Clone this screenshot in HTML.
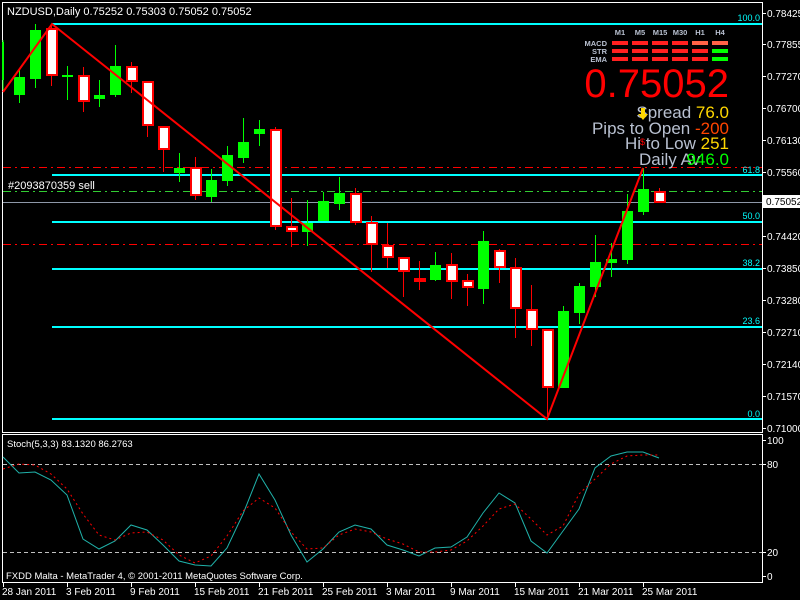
<!DOCTYPE html>
<html><head><meta charset="utf-8"><style>
html,body{margin:0;padding:0;background:#000;width:800px;height:600px;overflow:hidden}
svg{display:block}
text{font-family:"Liberation Sans",sans-serif}
</style></head><body>
<svg width="800" height="600" viewBox="0 0 800 600" xmlns="http://www.w3.org/2000/svg">
<rect width="800" height="600" fill="#000"/>
<rect x="2.5" y="2.5" width="760" height="430" fill="none" stroke="#fff"/>
<rect x="2.5" y="434.5" width="760" height="148" fill="none" stroke="#fff"/>
<g stroke-width="1">
<line x1="3" y1="167.5" x2="762" y2="167.5" stroke="#ff0000" stroke-dasharray="8,4,2,4"/>
<line x1="3" y1="244.5" x2="762" y2="244.5" stroke="#ff0000" stroke-dasharray="8,4,2,4"/>
<line x1="3" y1="191.5" x2="762" y2="191.5" stroke="#32cd32" stroke-dasharray="8,4,2,4"/>
<line x1="3" y1="202.5" x2="762" y2="202.5" stroke="#8e98a8"/>
</g>
<g stroke="#00ffff" stroke-width="2">
<line x1="52" y1="24" x2="762" y2="24"/>
<line x1="52" y1="175" x2="762" y2="175"/>
<line x1="52" y1="222" x2="762" y2="222"/>
<line x1="52" y1="269" x2="762" y2="269"/>
<line x1="52" y1="327" x2="762" y2="327"/>
<line x1="52" y1="419" x2="762" y2="419"/>
</g>
<g fill="#00ffff" font-size="9" text-anchor="end">
<text x="760" y="21">100.0</text>
<text x="760" y="173">61.8</text>
<text x="760" y="219">50.0</text>
<text x="760" y="266">38.2</text>
<text x="760" y="324">23.6</text>
<text x="760" y="417">0.0</text>
</g>
<g>
<line x1="3" y1="40" x2="3" y2="90" stroke="#00ff00"/>
<rect x="2" y="42" width="2" height="38" fill="#00ff00"/>
</g>
<g stroke-width="1">
<g stroke="#00ff00" fill="#00ff00">
<line x1="19.5" y1="70" x2="19.5" y2="103"/><rect x="14.5" y="77.5" width="10" height="17"/>
<line x1="35.5" y1="24" x2="35.5" y2="88"/><rect x="30.5" y="30.5" width="10" height="48"/>
<line x1="67.5" y1="66" x2="67.5" y2="100"/><rect x="62.5" y="75.5" width="10" height="1"/>
<line x1="99.5" y1="80" x2="99.5" y2="107"/><rect x="94.5" y="95.5" width="10" height="3"/>
<line x1="115.5" y1="45" x2="115.5" y2="97"/><rect x="110.5" y="66.5" width="10" height="28"/>
<line x1="179.5" y1="153" x2="179.5" y2="182"/><rect x="174.5" y="168.5" width="10" height="4"/>
<line x1="211.5" y1="169" x2="211.5" y2="202"/><rect x="206.5" y="180.5" width="10" height="16"/>
<line x1="227.5" y1="146" x2="227.5" y2="186"/><rect x="222.5" y="155.5" width="10" height="25"/>
<line x1="243.5" y1="118" x2="243.5" y2="163"/><rect x="238.5" y="142.5" width="10" height="15"/>
<line x1="259.5" y1="120" x2="259.5" y2="146"/><rect x="254.5" y="129.5" width="10" height="4"/>
<line x1="307.5" y1="200" x2="307.5" y2="246"/><rect x="302.5" y="223.5" width="10" height="8"/>
<line x1="323.5" y1="192" x2="323.5" y2="221"/><rect x="318.5" y="201.5" width="10" height="19"/>
<line x1="339.5" y1="177" x2="339.5" y2="210"/><rect x="334.5" y="193.5" width="10" height="10"/>
<line x1="435.5" y1="252" x2="435.5" y2="281"/><rect x="430.5" y="265.5" width="10" height="14"/>
<line x1="483.5" y1="231" x2="483.5" y2="304"/><rect x="478.5" y="241.5" width="10" height="47"/>
<line x1="563.5" y1="306" x2="563.5" y2="388"/><rect x="558.5" y="311.5" width="10" height="76"/>
<line x1="579.5" y1="283" x2="579.5" y2="324"/><rect x="574.5" y="286.5" width="10" height="26"/>
<line x1="595.5" y1="235" x2="595.5" y2="297"/><rect x="590.5" y="262.5" width="10" height="24"/>
<line x1="611.5" y1="243" x2="611.5" y2="277"/><rect x="606.5" y="259.5" width="10" height="3"/>
<line x1="627.5" y1="194" x2="627.5" y2="264"/><rect x="622.5" y="211.5" width="10" height="48"/>
<line x1="643.5" y1="168" x2="643.5" y2="215"/><rect x="638.5" y="189.5" width="10" height="22"/>
</g>
<g stroke="#ff0000" fill="#fff" stroke-width="2">
<line x1="51.5" y1="24" x2="51.5" y2="86" stroke-width="1"/><rect x="47" y="29" width="10" height="46"/>
<line x1="83.5" y1="67" x2="83.5" y2="112" stroke-width="1"/><rect x="79" y="76" width="10" height="25"/>
<line x1="131.5" y1="62" x2="131.5" y2="93" stroke-width="1"/><rect x="127" y="67" width="10" height="14"/>
<line x1="147.5" y1="81" x2="147.5" y2="137" stroke-width="1"/><rect x="143" y="82" width="10" height="43"/>
<line x1="163.5" y1="126" x2="163.5" y2="172" stroke-width="1"/><rect x="159" y="127" width="10" height="22"/>
<line x1="195.5" y1="157" x2="195.5" y2="200" stroke-width="1"/><rect x="191" y="168" width="10" height="27"/>
<line x1="275.5" y1="127" x2="275.5" y2="230" stroke-width="1"/><rect x="271" y="130" width="10" height="96"/>
<line x1="291.5" y1="198" x2="291.5" y2="247" stroke-width="1"/><rect x="287" y="227" width="10" height="4"/>
<line x1="355.5" y1="188" x2="355.5" y2="225" stroke-width="1"/><rect x="351" y="194" width="10" height="28"/>
<line x1="371.5" y1="216" x2="371.5" y2="272" stroke-width="1"/><rect x="367" y="223" width="10" height="21"/>
<line x1="387.5" y1="223" x2="387.5" y2="268" stroke-width="1"/><rect x="383" y="246" width="10" height="11"/>
<line x1="403.5" y1="257" x2="403.5" y2="297" stroke-width="1"/><rect x="399" y="258" width="10" height="13"/>
<line x1="419.5" y1="261" x2="419.5" y2="290" stroke-width="1"/><rect x="415" y="279" width="10" height="2"/>
<line x1="451.5" y1="253" x2="451.5" y2="299" stroke-width="1"/><rect x="447" y="265" width="10" height="16"/>
<line x1="467.5" y1="274" x2="467.5" y2="306" stroke-width="1"/><rect x="463" y="281" width="10" height="6"/>
<line x1="499.5" y1="249" x2="499.5" y2="283" stroke-width="1"/><rect x="495" y="251" width="10" height="16"/>
<line x1="515.5" y1="258" x2="515.5" y2="338" stroke-width="1"/><rect x="511" y="268" width="10" height="40"/>
<line x1="531.5" y1="285" x2="531.5" y2="346" stroke-width="1"/><rect x="527" y="310" width="10" height="19"/>
<line x1="547.5" y1="329" x2="547.5" y2="418" stroke-width="1"/><rect x="543" y="330" width="10" height="57"/>
<line x1="659.5" y1="188" x2="659.5" y2="202" stroke-width="1"/><rect x="655" y="192" width="10" height="10"/>
</g>
</g>
<polyline points="3,92 52,24 547,419 643,168" fill="none" stroke="#ff0000" stroke-width="2"/>
<text x="7" y="15" fill="#fff" font-size="11">NZDUSD,Daily  0.75252 0.75303 0.75052 0.75052</text>
<text x="8" y="189" fill="#fff" font-size="11">#2093870359 sell</text>
<g fill="#b8c0d0" font-size="7.5" font-weight="bold" text-anchor="middle">
<text x="620" y="35">M1</text><text x="640" y="35">M5</text><text x="660" y="35">M15</text><text x="680" y="35">M30</text><text x="700" y="35">H1</text><text x="720" y="35">H4</text>
</g>
<g fill="#b8c0d0" font-size="7.5" font-weight="bold" text-anchor="end">
<text x="607" y="46">MACD</text><text x="607" y="54">STR</text><text x="607" y="62">EMA</text>
</g>
<g fill="#ff2020">
<rect x="612" y="41" width="16" height="4"/><rect x="632" y="41" width="16" height="4"/><rect x="652" y="41" width="16" height="4"/><rect x="672" y="41" width="16" height="4"/>
<rect x="612" y="49" width="16" height="4"/><rect x="632" y="49" width="16" height="4"/><rect x="652" y="49" width="16" height="4"/><rect x="672" y="49" width="16" height="4"/><rect x="692" y="49" width="16" height="4"/>
<rect x="612" y="57" width="16" height="4"/><rect x="632" y="57" width="16" height="4"/><rect x="652" y="57" width="16" height="4"/><rect x="672" y="57" width="16" height="4"/><rect x="692" y="57" width="16" height="4"/>
</g>
<rect x="692" y="41" width="16" height="4" fill="#ff6347"/><rect x="712" y="41" width="16" height="4" fill="#ff6347"/>
<rect x="712" y="49" width="16" height="4" fill="#00ff00"/><rect x="712" y="57" width="16" height="4" fill="#00ff00"/>
<text x="729" y="97" fill="#ff0000" font-size="40" text-anchor="end">0.75052</text>
<g font-size="17">
<text x="729" y="118" text-anchor="end"><tspan fill="#b8c0d0">Spread </tspan><tspan fill="#ffd700">76.0</tspan></text>
<text x="729" y="134" text-anchor="end"><tspan fill="#b8c0d0">Pips to Open </tspan><tspan fill="#ff4500">-200</tspan></text>
<text x="729" y="149" text-anchor="end"><tspan fill="#b8c0d0">Hi to Low  </tspan><tspan fill="#ffd700">251</tspan></text>
<text x="639" y="165" fill="#b8c0d0">Daily Av</text>
<text x="729" y="165" fill="#00ff00" text-anchor="end">946.0</text>
</g>
<text x="640" y="145" fill="#ff0000" font-size="9">$</text>
<path d="M641,108 h4 v6 h3 l-5,6 l-5,-6 h3z" fill="#ffd700"/>
<g stroke="#fff">
<line x1="762" y1="13.5" x2="766" y2="13.5"/><line x1="762" y1="44.5" x2="766" y2="44.5"/><line x1="762" y1="76.5" x2="766" y2="76.5"/><line x1="762" y1="108.5" x2="766" y2="108.5"/><line x1="762" y1="140.5" x2="766" y2="140.5"/><line x1="762" y1="172.5" x2="766" y2="172.5"/><line x1="762" y1="236.5" x2="766" y2="236.5"/><line x1="762" y1="268.5" x2="766" y2="268.5"/><line x1="762" y1="300.5" x2="766" y2="300.5"/><line x1="762" y1="332.5" x2="766" y2="332.5"/><line x1="762" y1="364.5" x2="766" y2="364.5"/><line x1="762" y1="396.5" x2="766" y2="396.5"/><line x1="762" y1="428.5" x2="766" y2="428.5"/>
<line x1="762" y1="440.5" x2="766" y2="440.5"/><line x1="762" y1="464.5" x2="766" y2="464.5"/><line x1="762" y1="552.5" x2="766" y2="552.5"/><line x1="762" y1="576.5" x2="766" y2="576.5"/>
</g>
<g fill="#fff" font-size="10">
<text x="767" y="17">0.78425</text><text x="767" y="48">0.77855</text><text x="767" y="80">0.77270</text><text x="767" y="112">0.76700</text><text x="767" y="144">0.76130</text><text x="767" y="176">0.75560</text>
<text x="767" y="240">0.74420</text><text x="767" y="272">0.73850</text><text x="767" y="304">0.73280</text><text x="767" y="336">0.72710</text><text x="767" y="368">0.72140</text><text x="767" y="400">0.71570</text><text x="767" y="432">0.71000</text>
<text x="767" y="444">100</text><text x="767" y="468">80</text><text x="767" y="556">20</text><text x="767" y="580">0</text>
</g>
<rect x="763" y="195" width="37" height="13" fill="#fff"/>
<text x="766" y="205" fill="#000" font-size="10">0.75052</text>
<line x1="3" y1="464.5" x2="762" y2="464.5" stroke="#c0c0c0" stroke-dasharray="4,3"/>
<line x1="3" y1="552.5" x2="762" y2="552.5" stroke="#c0c0c0" stroke-dasharray="4,3"/>
<text x="7" y="447" fill="#fff" font-size="9.5">Stoch(5,3,3) 83.1320 86.2763</text>
<polyline fill="none" stroke="#20b2aa" stroke-width="1" points="3,457 19,473 35,472 51,480 67,495 83,539 99,549 115,541 131,525 147,530 163,545 179,561 195,565 211,566 227,548 243,514 259,474 275,500 291,535 307,562 323,549 339,532 355,525 371,529 387,545 403,550 419,556 435,548 451,547 467,537 483,513 499,493 515,503 531,541 547,553 563,531 579,509 595,468 611,456 627,452 643,452 659,458"/>
<polyline fill="none" stroke="#ff0000" stroke-width="1" stroke-dasharray="2,3" points="3,469 19,464 35,465 51,474 67,489 83,514 99,535 115,540 131,533 147,532 163,540 179,555 195,563 211,556 227,536 243,511 259,498 275,508 291,532 307,549 323,548 339,535 355,529 371,532 387,539 403,544 419,552 435,552 451,550 467,541 483,526 499,509 515,504 531,519 547,535 563,526 579,494 595,479 611,464 627,456 643,455 659,455"/>
<text x="6" y="579" fill="#fff" font-size="9.5">FXDD Malta - MetaTrader 4, © 2001-2011 MetaQuotes Software Corp.</text>
<g stroke="#fff"><line x1="3.5" y1="583" x2="3.5" y2="587"/><line x1="67.5" y1="583" x2="67.5" y2="587"/><line x1="131.5" y1="583" x2="131.5" y2="587"/><line x1="195.5" y1="583" x2="195.5" y2="587"/><line x1="259.5" y1="583" x2="259.5" y2="587"/><line x1="323.5" y1="583" x2="323.5" y2="587"/><line x1="387.5" y1="583" x2="387.5" y2="587"/><line x1="451.5" y1="583" x2="451.5" y2="587"/><line x1="515.5" y1="583" x2="515.5" y2="587"/><line x1="579.5" y1="583" x2="579.5" y2="587"/><line x1="643.5" y1="583" x2="643.5" y2="587"/></g>
<g fill="#fff" font-size="10">
<text x="2" y="595">28 Jan 2011</text><text x="66" y="595">3 Feb 2011</text><text x="130" y="595">9 Feb 2011</text><text x="194" y="595">15 Feb 2011</text><text x="258" y="595">21 Feb 2011</text><text x="322" y="595">25 Feb 2011</text><text x="386" y="595">3 Mar 2011</text><text x="450" y="595">9 Mar 2011</text><text x="514" y="595">15 Mar 2011</text><text x="578" y="595">21 Mar 2011</text><text x="642" y="595">25 Mar 2011</text>
</g>
</svg>
</body></html>
